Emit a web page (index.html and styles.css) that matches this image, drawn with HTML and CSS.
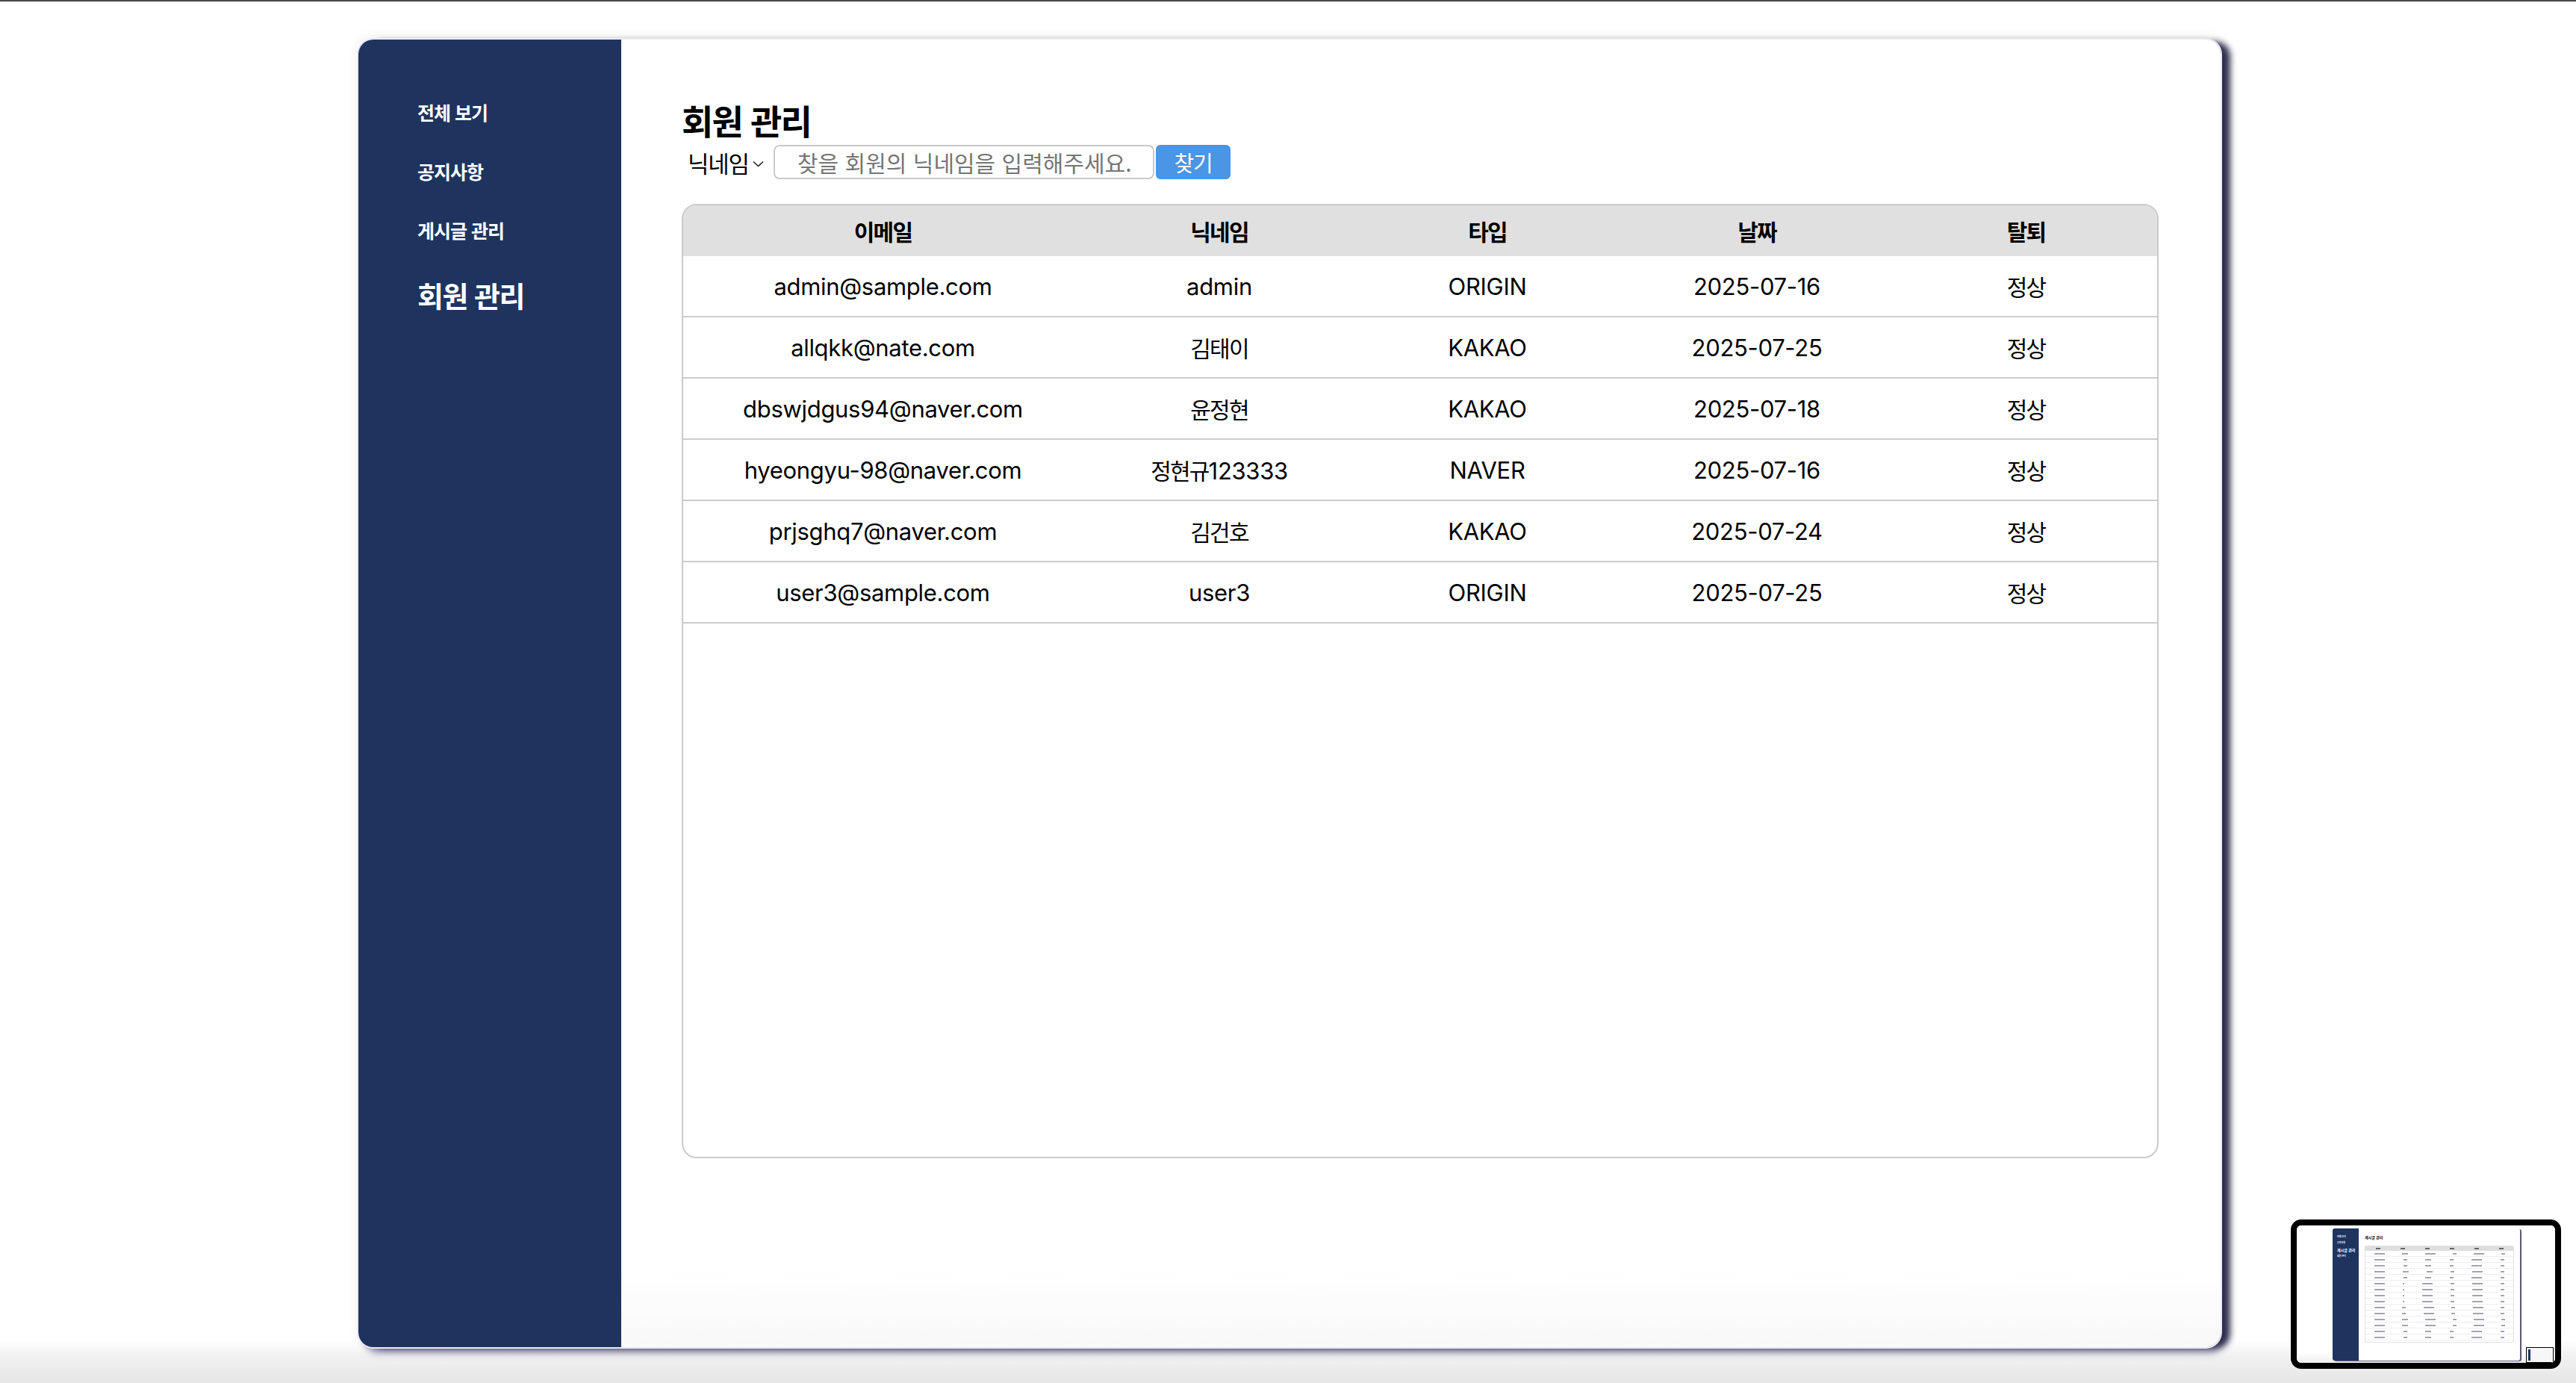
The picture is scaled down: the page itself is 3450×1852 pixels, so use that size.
FILE: index.html
```html
<!DOCTYPE html>
<html lang="ko">
<head>
<meta charset="utf-8">
<title>회원 관리</title>
<link rel="stylesheet" href="styles.css">
</head>
<body>
<div class="screen">
  <div class="card">
    <nav class="sidebar">
      <a class="nav-item">전체 보기</a>
      <a class="nav-item">공지사항</a>
      <a class="nav-item">게시글 관리</a>
      <a class="nav-item active">회원 관리</a>
    </nav>
    <main class="main">
      <h1 class="title">회원 관리</h1>
      <div class="search">
        <div class="select">
          <span class="ko">닉네임</span>
          <svg class="chev" width="15" height="9" viewBox="0 0 15 9"><path d="M1 1.5 L7.5 7.5 L14 1.5" fill="none" stroke="#222" stroke-width="1.6"/></svg>
        </div>
        <div class="input ko">찾을 회원의 닉네임을 입력해주세요.</div>
        <button class="btn ko">찾기</button>
      </div>
      <div class="table-wrap">
        <table class="table">
          <colgroup>
            <col class="c1"><col class="c2"><col class="c3"><col class="c4"><col class="c5">
          </colgroup>
          <thead>
            <tr><th>이메일</th><th>닉네임</th><th>타입</th><th>날짜</th><th>탈퇴</th></tr>
          </thead>
          <tbody>
            <tr><td>admin@sample.com</td><td>admin</td><td>ORIGIN</td><td>2025-07-16</td><td class="ko">정상</td></tr>
            <tr><td>allqkk@nate.com</td><td class="ko">김태이</td><td>KAKAO</td><td>2025-07-25</td><td class="ko">정상</td></tr>
            <tr><td>dbswjdgus94@naver.com</td><td class="ko">윤정현</td><td>KAKAO</td><td>2025-07-18</td><td class="ko">정상</td></tr>
            <tr><td>hyeongyu-98@naver.com</td><td><span class="ko">정현규</span>123333</td><td>NAVER</td><td>2025-07-16</td><td class="ko">정상</td></tr>
            <tr><td>prjsghq7@naver.com</td><td class="ko">김건호</td><td>KAKAO</td><td>2025-07-24</td><td class="ko">정상</td></tr>
            <tr><td>user3@sample.com</td><td>user3</td><td>ORIGIN</td><td>2025-07-25</td><td class="ko">정상</td></tr>
          </tbody>
        </table>
      </div>
    </main>
  </div>
</div>

<div class="thumb">
  <div class="thumb-inner">
    <div class="mini-card">
      <div class="mini-side">
        <span>전체 보기</span>
        <span>공지사항</span>
        <span class="mini-active">게시글 관리</span>
        <span>회원 관리</span>
      </div>
      <div class="mini-main">
        <div class="mini-title">게시글 관리</div>
        <div class="mini-table">
          <div class="mini-head"><i></i><i></i><i></i><i></i><i></i><i></i></div>
          <div class="mini-row"><i></i><i class="s"></i><i></i><i class="t"></i><i></i><i class="t"></i></div>
          <div class="mini-row"><i></i><i class="t"></i><i class="s"></i><i class="t"></i><i></i><i class="t"></i></div>
          <div class="mini-row"><i></i><i class="t"></i><i class="s"></i><i class="t"></i><i></i><i class="t"></i></div>
          <div class="mini-row"><i></i><i class="s"></i><i class="s"></i><i class="t"></i><i></i><i class="t"></i></div>
          <div class="mini-row"><i></i><i class="t"></i><i class="s"></i><i class="t"></i><i></i><i class="t"></i></div>
          <div class="mini-row"><i></i><i class="d"></i><i></i><i class="t"></i><i></i><i class="t"></i></div>
          <div class="mini-row"><i></i><i class="d"></i><i></i><i class="t"></i><i></i><i class="t"></i></div>
          <div class="mini-row"><i></i><i class="d"></i><i></i><i class="t"></i><i></i><i class="t"></i></div>
          <div class="mini-row"><i></i><i class="d"></i><i></i><i class="t"></i><i></i><i class="t"></i></div>
          <div class="mini-row"><i></i><i class="t"></i><i></i><i class="t"></i><i></i><i class="t"></i></div>
          <div class="mini-row"><i></i><i class="t"></i><i></i><i class="t"></i><i></i><i class="t"></i></div>
          <div class="mini-row"><i></i><i class="s"></i><i></i><i class="t"></i><i></i><i class="t"></i></div>
          <div class="mini-row"><i></i><i class="s"></i><i></i><i class="t"></i><i></i><i class="t"></i></div>
          <div class="mini-row"><i></i><i class="t"></i><i class="s"></i><i class="t"></i><i></i><i class="t"></i></div>
          <div class="mini-row"><i></i><i class="t"></i><i class="s"></i><i class="t"></i><i></i><i class="t"></i></div>
        </div>
      </div>
    </div>
    <div class="mini-mini"><div class="mm-side"></div></div>
  </div>
</div>
</body>
</html>
```

FILE: styles.css
```css
html, body {
  margin: 0;
  height: 100%;
}
body {
  border-top: 2px solid #474747;
  box-sizing: border-box;
  background: linear-gradient(to bottom, #ffffff 0, #ffffff 1795px, #f0f0f0 1818px, #e6e6e6 1852px);
  font-family: Inter, "Noto Sans CJK KR", sans-serif;
  color: #000;
  overflow: hidden;
  position: relative;
}
.ko {
  font-family: "Noto Sans CJK KR", sans-serif;
}
.screen {
  padding: 51px 0 0 480px;
}
.card {
  width: 2494px;
  height: 1751px;
  display: flex;
  border-radius: 20px;
  background: linear-gradient(to bottom, #fff 0, #fff 1650px, #f8f8f8 1751px);
  box-shadow: 0 0 0 2px #e8eaf7,
              14px 2px 9px -1px rgba(38, 36, 70, 0.95),
              6px 10px 10px -2px rgba(80, 75, 120, 0.55),
              0 -4px 16px rgba(0, 0, 0, 0.07);
  overflow: hidden;
}
.sidebar {
  width: 352px;
  flex: none;
  background: #1e345f;
  display: flex;
  flex-direction: column;
  gap: 46px;
  padding: 81px 0 0 79px;
  box-sizing: border-box;
  font-family: "Noto Sans CJK KR", sans-serif;
}
.nav-item {
  color: #fff;
  font-weight: 700;
  font-size: 25px;
  line-height: 33px;
  letter-spacing: -0.04em;
}
.nav-item.active {
  font-size: 38px;
  line-height: 48px;
}
.main {
  flex: 1;
  padding: 78px 83px 0 81px;
  display: flex;
  flex-direction: column;
}
.title {
  margin: 0;
  font-family: "Noto Sans CJK KR", sans-serif;
  font-size: 46px;
  line-height: 58px;
  font-weight: 700;
  letter-spacing: -0.04em;
}
.search {
  margin-top: 5px;
  height: 46px;
  display: flex;
  align-items: center;
}
.select {
  display: flex;
  align-items: center;
  padding-left: 8px;
  font-size: 31px;
  gap: 5px;
  width: 123px;
  box-sizing: border-box;
  letter-spacing: -0.04em;
}
.chev {
  margin-top: 4px;
}
.input {
  width: 510px;
  height: 46px;
  box-sizing: border-box;
  border: 2px solid #c9c9c9;
  border-radius: 8px;
  padding-left: 30px;
  display: flex;
  align-items: center;
  font-size: 30px;
  color: #757575;
  letter-spacing: 0;
  white-space: nowrap;
  overflow: hidden;
}
.btn {
  margin-left: 2px;
  width: 100px;
  height: 46px;
  border: none;
  border-radius: 6px;
  background: #4a95e5;
  color: #fff;
  font-size: 29px;
  padding: 0;
  letter-spacing: -0.04em;
}
.table-wrap {
  margin-top: 33px;
  height: 1278px;
  border: 2px solid #cacaca;
  border-radius: 20px;
  overflow: hidden;
  box-sizing: border-box;
}
.table {
  width: 100%;
  border-collapse: collapse;
  table-layout: fixed;
}
.c1 { width: 535px; }
.c2 { width: 366px; }
.c3 { width: 352px; }
.c4 { width: 370px; }
.table th {
  background: #e0e0e0;
  height: 68px;
  font-family: "Noto Sans CJK KR", sans-serif;
  font-size: 30px;
  font-weight: 700;
  letter-spacing: -0.06em;
  padding: 0;
}
.table td {
  height: 80px;
  border-bottom: 2px solid #cccccc;
  text-align: center;
  font-size: 31px;
  padding: 0;
  letter-spacing: -0.01em;
}
.table td.ko, .table td .ko {
  font-size: 30px;
  letter-spacing: -0.06em;
}

/* screenshot thumbnail overlay */
.thumb {
  position: absolute;
  left: 3068px;
  top: 1631px;
  width: 362px;
  height: 200px;
  box-sizing: border-box;
  border: 8px solid #000;
  border-radius: 14px;
  background: #fdfdfd;
  overflow: hidden;
}
.thumb-inner {
  position: relative;
  width: 100%;
  height: 100%;
  background: linear-gradient(to bottom, #fff 0, #fff 170px, #eeeeee 184px);
}
.mini-card {
  position: absolute;
  left: 48px;
  top: 4px;
  width: 251px;
  height: 177px;
  display: flex;
  background: #fff;
  border-radius: 3px;
  overflow: hidden;
  box-shadow: 2px 1px 1px #55536f;
}
.mini-side {
  width: 35px;
  flex: none;
  background: #1e345f;
  display: flex;
  flex-direction: column;
  gap: 3px;
  padding: 9px 0 0 6px;
  box-sizing: border-box;
  font-family: "Noto Sans CJK KR", sans-serif;
  font-size: 3px;
  line-height: 5px;
  font-weight: 700;
  color: #fff;
  white-space: nowrap;
}
.mini-active {
  font-size: 5px;
  line-height: 7px;
}
.mini-main {
  flex: 1;
  padding: 8px 5px 0 8px;
}
.mini-title {
  font-family: "Noto Sans CJK KR", sans-serif;
  font-size: 5px;
  line-height: 8px;
  font-weight: 700;
}
.mini-table {
  margin-top: 7px;
  width: 198px;
  height: 128px;
  border: 1px solid #e2e2e2;
  border-radius: 2px;
  overflow: hidden;
}
.mini-head {
  height: 6px;
  background: #dedede;
  display: flex;
  align-items: center;
  justify-content: space-around;
}
.mini-head i {
  display: block;
  width: 6px;
  height: 2px;
  background: #666;
}
.mini-row {
  height: 8px;
  border-bottom: 1px solid #eee;
  display: flex;
  align-items: center;
  justify-content: space-around;
  box-sizing: border-box;
}
.mini-row i {
  display: block;
  width: 14px;
  height: 2px;
  background: #a4a4b0;
}
.mini-row i.s { width: 8px; }
.mini-row i.t { width: 5px; }
.mini-row i.d { width: 2px; }
.mini-mini {
  position: absolute;
  left: 307px;
  top: 163px;
  width: 37px;
  height: 21px;
  box-sizing: border-box;
  border: 1px solid #000;
  background: #f7f7f7;
  padding: 2px;
}
.mm-side {
  width: 3px;
  height: 100%;
  background: #1e345f;
}
```
